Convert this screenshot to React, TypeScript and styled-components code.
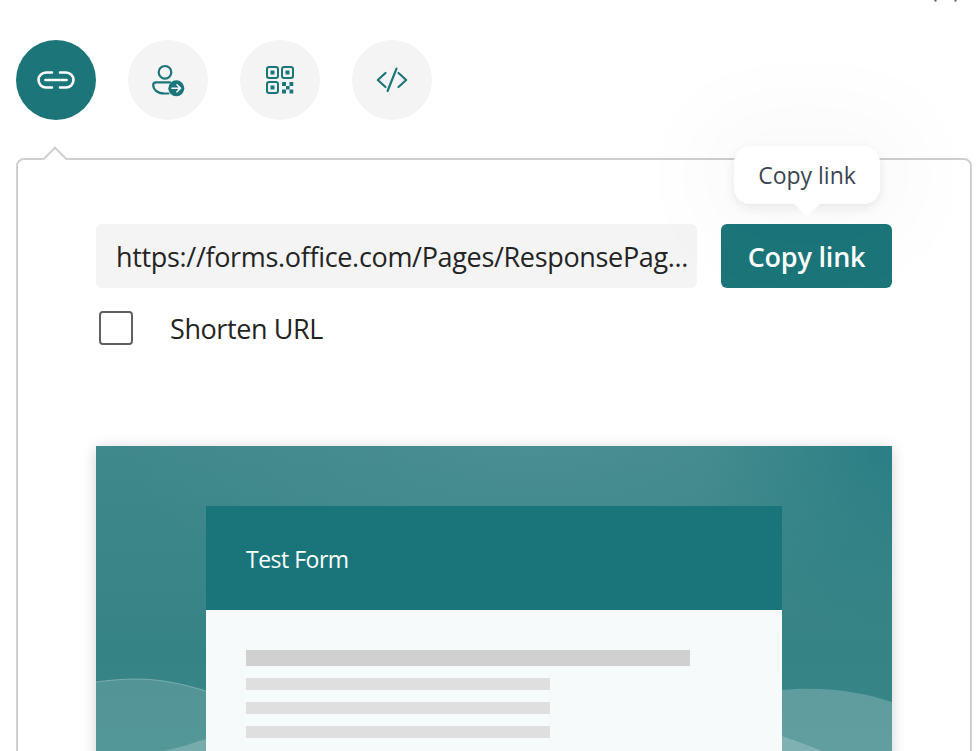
import React from "react";
import styled, { createGlobalStyle } from "styled-components";

const Global = createGlobalStyle`
  html, body { margin: 0; padding: 0; background: #fff; }
  body { font-family: "Open Sans", "Noto Sans", sans-serif; }
  #root { height: 751px; overflow: hidden; }
`;

const Page = styled.div`
  position: relative;
  width: 976px;
  height: 751px;
  overflow: hidden;
  background: #fff;
`;

const TopMarks = styled.svg`
  position: absolute;
  top: 0;
  left: 930px;
`;

const Tabs = styled.div`
  display: flex;
  gap: 32px;
  padding: 40px 0 0 16px;
`;

const TabButton = styled.button<{ $active?: boolean }>`
  width: 80px;
  height: 80px;
  border: 0;
  padding: 0;
  border-radius: 50%;
  display: flex;
  align-items: center;
  justify-content: center;
  background: ${(p) => (p.$active ? "#1b7579" : "#f4f4f4")};
`;

const Panel = styled.div`
  position: relative;
  box-sizing: border-box;
  width: 956px;
  height: 700px;
  margin: 38px 0 0 16px;
  padding: 64px 78px 0;
  border: 2px solid #cfcfcf;
  border-radius: 8px;
`;

const Notch = styled.span`
  position: absolute;
  top: -10px;
  left: 28px;
  width: 16px;
  height: 16px;
  background: #fff;
  border-top: 2px solid #cfcfcf;
  border-left: 2px solid #cfcfcf;
  transform: rotate(45deg);
`;

const LinkRow = styled.div`
  display: flex;
  gap: 24px;
`;

const UrlField = styled.div`
  flex: 1;
  min-width: 0;
  box-sizing: border-box;
  height: 64px;
  padding: 0 8px 0 20px;
  display: flex;
  align-items: center;
  background: #f4f4f4;
  border-radius: 6px;
  color: #242424;
  font-size: 27px;
  letter-spacing: -0.33px;
  white-space: nowrap;
`;

const CopyWrap = styled.div`
  position: relative;
  flex: none;
`;

const CopyButton = styled.button`
  width: 171px;
  height: 64px;
  border: 0;
  padding: 0;
  border-radius: 6px;
  background: #1b7579;
  color: #fff;
  font-family: inherit;
  font-size: 27px;
  font-weight: 600;
  letter-spacing: -0.2px;
`;

const Tooltip = styled.div`
  position: absolute;
  z-index: 2;
  top: -78px;
  left: 13px;
  width: 146px;
  height: 58px;
  display: flex;
  align-items: center;
  justify-content: center;
  background: #fff;
  border-radius: 16px;
  color: #3b4552;
  font-size: 23px;
  letter-spacing: 0;
  box-shadow: 0 4px 12px rgba(0, 0, 0, 0.08), 0 0 90px 40px rgba(40, 50, 80, 0.025);
  &::after {
    content: "";
    position: absolute;
    left: 64px;
    bottom: -9px;
    width: 18px;
    height: 18px;
    background: #fff;
    transform: rotate(45deg);
  }
`;

const ShortenRow = styled.label`
  display: flex;
  align-items: center;
  gap: 37px;
  margin: 23px 0 0 3px;
  color: #242424;
  font-size: 27px;
  letter-spacing: -0.42px;
  height: 34px;
`;

const CheckBox = styled.span`
  box-sizing: border-box;
  width: 34px;
  height: 34px;
  border: 2px solid #616161;
  border-radius: 4px;
  background: #fff;
`;

const Preview = styled.div`
  position: relative;
  height: 400px;
  margin-top: 101px;
  padding: 60px 110px 0;
  background:
    radial-gradient(ellipse 420px 170px at 55% 0%, rgba(255, 255, 255, 0.06), transparent),
    radial-gradient(ellipse 200px 190px at 100% 0%, #2a7f84 10%, rgba(42, 127, 132, 0) 100%),
    linear-gradient(to bottom, #3f888b 0%, #368385 45%, #3f8b8e 100%);
  box-shadow: 0 2px 14px rgba(0, 0, 0, 0.18);
`;

const Waves = styled.svg`
  position: absolute;
  top: 0;
  left: 0;
`;

const FormCard = styled.div`
  position: relative;
`;

const FormHeader = styled.div`
  height: 104px;
  box-sizing: border-box;
  padding: 2px 0 0 40px;
  display: flex;
  align-items: center;
  background: #1a757a;
  color: #fff;
  font-size: 23px;
  letter-spacing: -0.5px;
`;

const FormBody = styled.div`
  height: 300px;
  box-sizing: border-box;
  padding: 40px 40px 0;
  background: #f6fafb;
  display: flex;
  flex-direction: column;
  gap: 12px;
`;

const TitleBar = styled.div`
  width: 444px;
  height: 16px;
  background: #d0d0d0;
`;

const LineBar = styled.div`
  width: 304px;
  height: 12px;
  background: #dfdfdf;
`;

const ic = { fill: "none", stroke: "#1b7579", strokeWidth: 2.2, strokeLinecap: "round" as const, strokeLinejoin: "round" as const };

const LinkIcon = () => (
  <svg width="40" height="40" viewBox="0 0 40 40" fill="none" stroke="#fff" strokeWidth="2.6" strokeLinecap="round">
    <path d="M16 12.5H10a7.5 7.5 0 0 0 0 15h6M24 12.5h6a7.5 7.5 0 0 1 0 15h-6M9.5 20h21" />
  </svg>
);

const ShareIcon = () => (
  <svg width="40" height="40" viewBox="0 0 40 40">
    <g {...ic}>
      <circle cx="17" cy="12.3" r="6.3" />
      <path d="M22 22.3H8a2.8 2.8 0 0 0-2.8 2.8c0 4 3.8 8.4 11.3 8.4h4" />
    </g>
    <circle cx="28.3" cy="28.3" r="8" fill="#1b7579" />
    <path d="M24 28.3h8.4M29 24.8l3.5 3.5-3.5 3.5" fill="none" stroke="#fff" strokeWidth="1.6" strokeLinecap="round" strokeLinejoin="round" />
  </svg>
);

const QrIcon = () => (
  <svg width="40" height="40" viewBox="0 0 40 40">
    <g fill="none" stroke="#1b7579" strokeWidth="2">
      <rect x="7" y="7" width="11" height="11" rx="2.2" />
      <rect x="22" y="7" width="11" height="11" rx="2.2" />
      <rect x="7" y="22" width="11" height="11" rx="2.2" />
    </g>
    <g fill="#1b7579">
      <rect x="10.5" y="10.5" width="4" height="4" />
      <rect x="25.5" y="10.5" width="4" height="4" />
      <rect x="10.5" y="25.5" width="4" height="4" />
      <rect x="22" y="22" width="4" height="4" rx="0.6" />
      <rect x="29.5" y="22" width="3.8" height="4" rx="0.6" />
      <rect x="26" y="26" width="3.6" height="3.5" />
      <rect x="22" y="29.5" width="4" height="4" rx="0.6" />
      <rect x="29.5" y="29.5" width="3.8" height="4" rx="0.6" />
    </g>
  </svg>
);

const CodeIcon = () => (
  <svg width="40" height="40" viewBox="0 0 40 40">
    <path {...ic} d="M13.5 13L5.8 20l7.7 7M26.5 13l7.7 7-7.7 7M24.5 8.6L15.6 31" />
  </svg>
);

export default function App() {
  return (
    <Page>
      <Global />
      <TopMarks width="30" height="2" viewBox="0 0 30 2">
        <rect x="4.5" width="2" height="1.5" fill="#555" />
        <rect x="24.5" width="2" height="1.5" fill="#555" />
      </TopMarks>
      <Tabs>
        <TabButton $active aria-label="Share link"><LinkIcon /></TabButton>
        <TabButton aria-label="Send to people"><ShareIcon /></TabButton>
        <TabButton aria-label="QR code"><QrIcon /></TabButton>
        <TabButton aria-label="Embed"><CodeIcon /></TabButton>
      </Tabs>
      <Panel>
        <Notch />
        <LinkRow>
          <UrlField>https://forms.office.com/Pages/ResponsePag...</UrlField>
          <CopyWrap>
            <Tooltip>Copy link</Tooltip>
            <CopyButton>Copy link</CopyButton>
          </CopyWrap>
        </LinkRow>
        <ShortenRow><CheckBox />Shorten URL</ShortenRow>
        <Preview>
          <Waves width="796" height="305" viewBox="0 0 796 305">
            <path d="M0 236C45 230 70 233 110 245V305H0Z" fill="#fff" opacity="0.14" />
            <path d="M0 236C45 230 70 233 110 245" fill="none" stroke="#fff" strokeOpacity="0.28" />
            <path d="M686 244C730 240 765 246 796 256V305H686Z" fill="#fff" opacity="0.2" />
            <path d="M67 305C80 303 100 296 110 293V305ZM686 290C700 295 715 300 726 305H686Z" fill="#fff" opacity="0.2" />
          </Waves>
          <FormCard>
            <FormHeader>Test Form</FormHeader>
            <FormBody>
              <TitleBar />
              <LineBar />
              <LineBar />
              <LineBar />
            </FormBody>
          </FormCard>
        </Preview>
      </Panel>
    </Page>
  );
}
